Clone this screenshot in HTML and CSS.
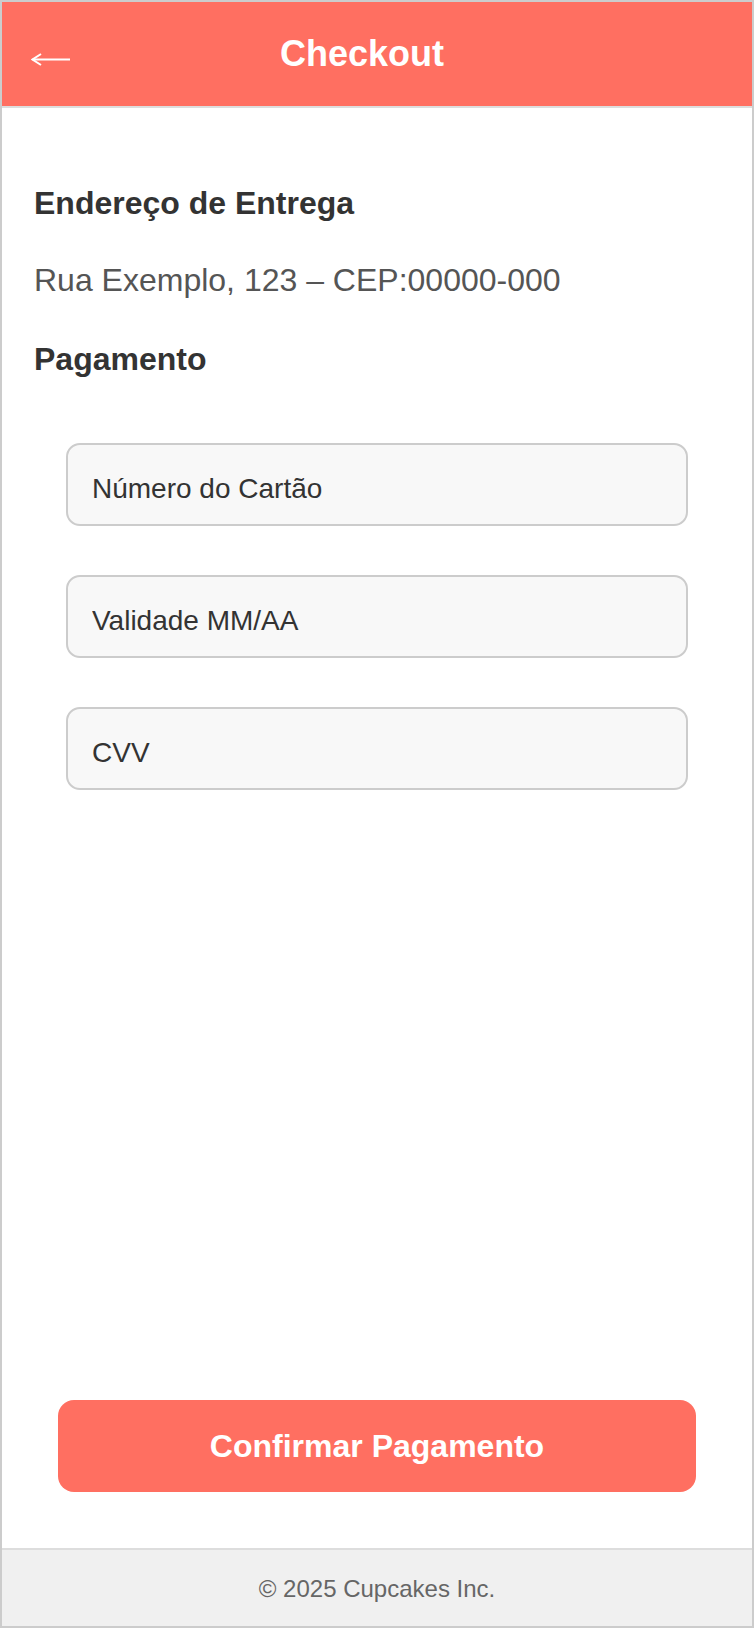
FILE: index.html
```html
<!DOCTYPE html>
<html lang="pt-BR">
<head>
<meta charset="utf-8">
<title>Checkout</title>
<link rel="stylesheet" href="styles.css">
</head>
<body>
<div class="app">
  <header class="topbar">
    <button class="back" aria-label="Voltar">
      <svg width="40" height="16" viewBox="0 0 40 16" aria-hidden="true">
        <path d="M1.5 7.5 H39" stroke="#fff" stroke-width="2.2" fill="none"/>
        <path d="M10 2 L1.5 7.5 L10 13" stroke="#fff" stroke-width="2" fill="none" stroke-linejoin="miter"/>
      </svg>
    </button>
    <h1 class="title">Checkout</h1>
    <span class="spacer"></span>
  </header>
  <main class="content">
    <h2 class="section-title">Endereço de Entrega</h2>
    <p class="address">Rua Exemplo, 123 – CEP:00000-000</p>
    <h2 class="section-title payment-title">Pagamento</h2>
    <form class="card-form">
      <input class="field" type="text" placeholder="Número do Cartão">
      <input class="field" type="text" placeholder="Validade MM/AA">
      <input class="field" type="text" placeholder="CVV">
    </form>
    <button class="confirm" type="button">Confirmar Pagamento</button>
  </main>
  <footer class="footer">© 2025 Cupcakes Inc.</footer>
</div>
</body>
</html>
```
FILE: styles.css
```css
* { box-sizing: border-box; }
html, body { margin: 0; padding: 0; background: #fff; }
body { font-family: "Liberation Sans", Arial, sans-serif; }

.app {
  width: 754px;
  height: 1628px;
  border: 2px solid #cccccc;
  display: flex;
  flex-direction: column;
  background: #fff;
}

.topbar {
  height: 106px;
  background: #ff6f61;
  border-bottom: 2px solid #dddddd;
  display: grid;
  grid-template-columns: 70px 1fr 100px;
  align-items: center;
}

.back {
  background: none;
  border: 0;
  padding: 11px 0 0 29px;
  margin: 0;
  display: flex;
  align-items: center;
  cursor: pointer;
}
.back svg { display: block; }

.title {
  margin: 0;
  color: #fff;
  font-size: 36px;
  font-weight: bold;
  text-align: center;
  line-height: 44px;
}

.content {
  flex: 1;
  display: flex;
  flex-direction: column;
  padding: 75px 32px 56px;
}

.section-title {
  margin: 0;
  font-size: 32px;
  line-height: 40px;
  font-weight: bold;
  color: #333333;
}

.address {
  margin: 39px 0 0;
  font-size: 32px;
  line-height: 36px;
  color: #555555;
}

.payment-title { margin-top: 41px; }

.card-form {
  margin: 64px 32px 0;
  display: flex;
  flex-direction: column;
  gap: 49px;
}

.field {
  display: block;
  width: 100%;
  height: 83px;
  border: 2px solid #cccccc;
  border-radius: 14px;
  background: #f8f8f8;
  padding: 8px 24px 0;
  font-family: "Liberation Sans", Arial, sans-serif;
  font-size: 28px;
  color: #333333;
  outline: none;
}
.field::placeholder { color: #333333; opacity: 1; }

.confirm {
  margin: auto 24px 0;
  height: 92px;
  border: 0;
  border-radius: 16px;
  background: #ff6f61;
  color: #fff;
  font-family: "Liberation Sans", Arial, sans-serif;
  font-size: 32px;
  font-weight: bold;
  cursor: pointer;
}

.footer {
  height: 78px;
  border-top: 2px solid #dddddd;
  background: #f0f0f0;
  color: #666666;
  font-size: 24px;
  display: flex;
  align-items: center;
  justify-content: center;
  padding-top: 2px;
}
```
